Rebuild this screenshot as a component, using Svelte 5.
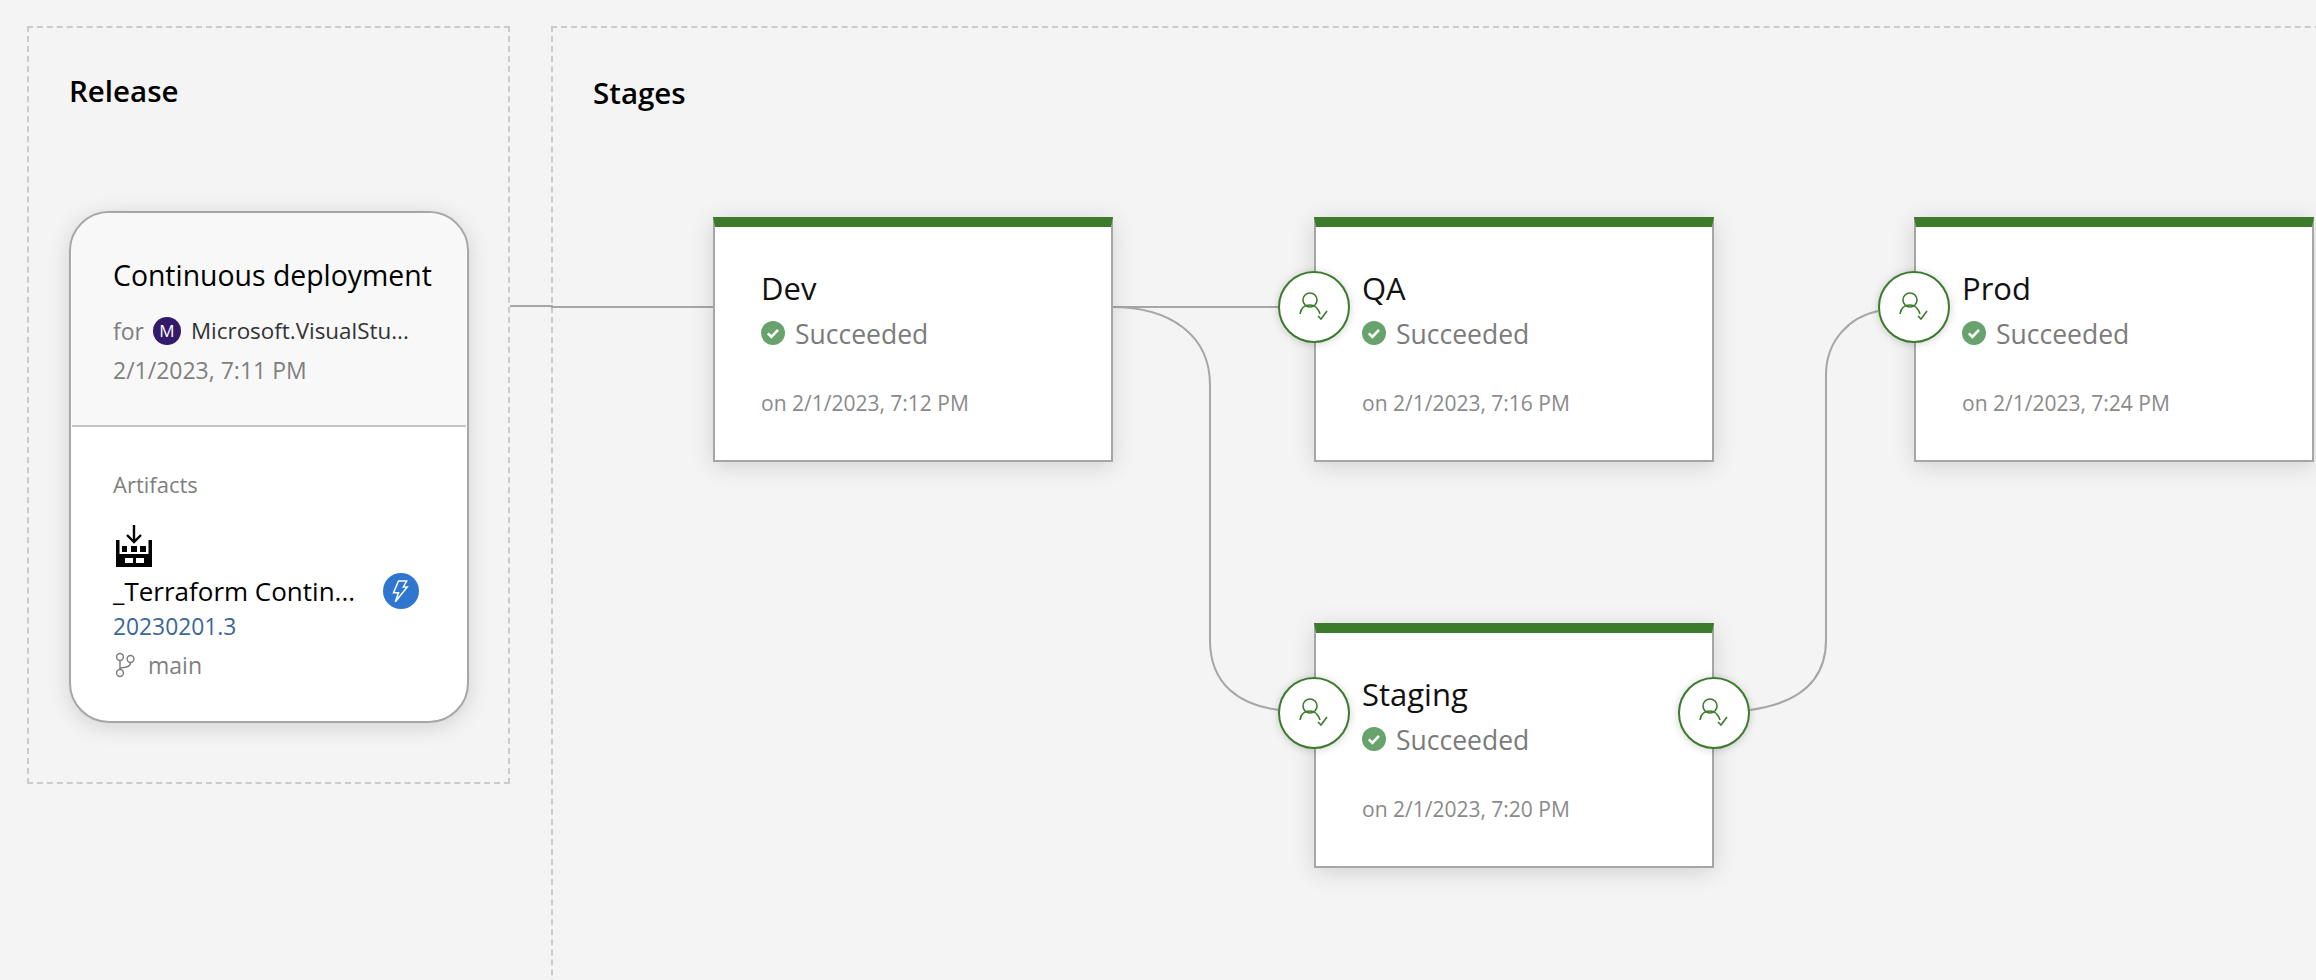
<script>
  const stages = [
    { name: "Dev", date: "on 2/1/2023, 7:12 PM", x: 713, y: 217, pre: false, post: false },
    { name: "QA", date: "on 2/1/2023, 7:16 PM", x: 1314, y: 217, pre: true, post: false },
    { name: "Prod", date: "on 2/1/2023, 7:24 PM", x: 1914, y: 217, pre: true, post: false },
    { name: "Staging", date: "on 2/1/2023, 7:20 PM", x: 1314, y: 623, pre: true, post: true },
  ];
  const wires = [
    "M510 306 L552 306 L552 307 L713 307",
    "M1112 307 L1280 307",
    "M1112 307 C1170 307 1210 335 1210 385 L1210 640 C1210 685 1240 705 1279 710",
    "M1750 710 C1800 703 1826 680 1826 640 L1826 375 C1826 340 1850 317 1878 311",
  ];
</script>

{#snippet approver(side)}
  <div class="approver {side}">
    <svg width="72" height="72" viewBox="-36 -36 72 72" fill="none" stroke="#3c7a2c" stroke-width="1.6">
      <circle cx="-4" cy="-7" r="7" />
      <path d="M-14 7 C-13 0 -9 -2 -4 -2 C1 -2 4 1 6 7" />
      <path d="M4 9 L7 12 L13 4" />
    </svg>
  </div>
{/snippet}

<div class="page">
  <section class="release">
    <h2>Release</h2>
    <div class="card">
      <div class="card-head">
        <div class="trigger">Continuous deployment</div>
        <div class="for">
          <span class="muted">for</span>
          <span class="avatar">M</span>
          <span class="owner">Microsoft.VisualStu...</span>
        </div>
        <div class="muted when">2/1/2023, 7:11 PM</div>
      </div>
      <div class="card-body">
        <div class="muted artifacts">Artifacts</div>
        <svg class="factory" width="36" height="42" viewBox="0 0 36 42">
          <path d="M18 0 V16 M11 10 L18 17 L25 10" fill="none" stroke="#000" stroke-width="2.4" />
          <path fill-rule="evenodd" d="M0 15 H3.5 V29 H32.5 V15 H36 V42 H0 Z M9 33 V38 H17 V33 Z M20 33 V38 H28 V33 Z" />
          <rect x="6" y="21" width="5" height="6" />
          <rect x="15" y="21" width="6" height="6" />
          <rect x="24" y="21" width="6" height="6" />
        </svg>
        <div class="artifact-row">
          <span class="artifact-name">_Terraform Contin...</span>
          <span class="badge">
            <svg width="36" height="36" viewBox="-18 -18 36 36">
              <circle r="18" fill="#2f76cf" />
              <path d="M-2.5 -10 H5.7 L2.3 -4 H6.3 L-5.7 10.7 L-2.5 1.7 H-7.5 Z" fill="none" stroke="#fff" stroke-width="1.5" />
            </svg>
          </span>
        </div>
        <div class="version">20230201.3</div>
        <div class="branch">
          <svg width="22" height="26" viewBox="0 0 22 26" fill="none" stroke="#808080" stroke-width="1.5">
            <circle cx="5" cy="5" r="3.4" />
            <circle cx="5" cy="21" r="3.4" />
            <circle cx="15.5" cy="7" r="3.4" />
            <path d="M5 8.4 V17.6 M15.5 10.4 C15.5 15 10 15.5 5 16" />
          </svg>
          <span class="muted">main</span>
        </div>
      </div>
    </div>
  </section>

  <section class="stages">
    <h2>Stages</h2>
    <svg class="wires" width="2316" height="980" fill="none" stroke="#a6a6a6" stroke-width="2">
      {#each wires as d}
        <path {d} />
      {/each}
    </svg>
    {#each stages as s}
      <div class="node" style="left: {s.x - 553}px; top: {s.y - 28}px">
        <div class="node-name">{s.name}</div>
        <div class="status">
          <svg width="24" height="24" viewBox="0 0 24 24">
            <circle cx="12" cy="12" r="12" fill="#68a26c" />
            <path d="M6.8 12.4 L10.4 15.8 L17 8.8" fill="none" stroke="#fff" stroke-width="2.6" />
          </svg>
          <span>Succeeded</span>
        </div>
        <div class="node-date">{s.date}</div>
        {#if s.pre}{@render approver("pre")}{/if}
        {#if s.post}{@render approver("post")}{/if}
      </div>
    {/each}
  </section>
</div>

<style>
  :global(body) {
    margin: 0;
    background: #f4f4f4;
    overflow: hidden;
  }

  .page {
    display: flex;
    gap: 41px;
    width: 2316px;
    height: 980px;
    overflow: hidden;
    padding: 26px 0 0 27px;
    box-sizing: border-box;
    font-family: "Open Sans", "Noto Sans", sans-serif;
    color: #000;
  }

  h2 {
    margin: 0;
    font-size: 29.5px;
    font-weight: 600;
    line-height: 40px;
  }

  .release,
  .stages {
    border: 2px dashed #cbcbcb;
    box-sizing: border-box;
    flex: none;
  }

  .release {
    width: 483px;
    height: 758px;
    padding: 43px 40px 0 40px;
  }

  .stages {
    position: relative;
    width: 1850px;
    height: 1100px;
    padding: 45px 0 0 40px;
  }

  .wires {
    position: absolute;
    left: -553px;
    top: -28px;
  }

  .card {
    margin-top: 100px;
    width: 400px;
    height: 512px;
    box-sizing: border-box;
    border: 2px solid #a6a6a6;
    border-radius: 40px;
    background: #fff;
    box-shadow: 0 4px 22px rgba(0, 0, 0, 0.14);
    overflow: hidden;
  }

  .card-head {
    height: 214px;
    box-sizing: border-box;
    padding: 42px 0 0 41px;
    background: #f8f8f8;
    border-bottom: 2px solid #c4c4c4;
    margin: 0 1px;
  }

  .trigger {
    font-size: 28.4px;
    line-height: 40px;
  }

  .for {
    display: flex;
    align-items: center;
    margin-top: 20px;
    font-size: 23px;
    line-height: 32px;
  }

  .muted {
    color: #7f7f7f;
  }

  .avatar {
    width: 28px;
    height: 28px;
    margin: 0 10px 0 9px;
    border-radius: 50%;
    background: #341a6b;
    color: #fff;
    font-size: 17px;
    line-height: 28px;
    text-align: center;
  }

  .owner {
    color: #333;
    font-size: 22.4px;
  }

  .when {
    margin-top: 7px;
    font-size: 23px;
    line-height: 32px;
  }

  .card-body {
    padding: 42px 0 0 42px;
  }

  .artifacts {
    font-size: 22px;
    line-height: 30px;
  }

  .factory {
    display: block;
    margin: 26px 0 0 3px;
  }

  .artifact-row {
    display: flex;
    align-items: center;
    height: 40px;
    margin-top: 4px;
    font-size: 26px;
  }

  .artifact-name {
    width: 270px;
  }

  .badge {
    display: flex;
  }

  .version {
    margin-top: 0;
    font-size: 22.8px;
    line-height: 32px;
    color: #3b6699;
  }

  .branch {
    display: flex;
    align-items: center;
    gap: 11px;
    margin: 6px 0 0 2px;
    font-size: 23px;
    line-height: 32px;
  }

  .node {
    position: absolute;
    width: 400px;
    height: 245px;
    box-sizing: border-box;
    border: 2px solid #a6a6a6;
    border-top: 10px solid #3c7a2c;
    padding: 40px 0 0 46px;
    background: #fff;
    box-shadow: 0 4px 22px rgba(0, 0, 0, 0.14);
  }

  .node-name {
    font-size: 31px;
    line-height: 42px;
    color: #111;
  }

  .status {
    display: flex;
    align-items: center;
    gap: 10px;
    margin-top: 7px;
    font-size: 26.5px;
    line-height: 36px;
    color: #7b7b7b;
  }

  .status svg {
    flex: none;
    margin-top: -2px;
  }

  .node-date {
    margin-top: 36px;
    font-size: 21px;
    line-height: 30px;
    color: #8a8a8a;
  }

  .approver {
    position: absolute;
    top: 44px;
    width: 72px;
    height: 72px;
    box-sizing: border-box;
    border: 2px solid #3c7a2c;
    border-radius: 50%;
    background: #fff;
    box-shadow: 0 1px 8px rgba(0, 0, 0, 0.18);
  }

  .approver svg {
    display: block;
    margin: -2px;
  }

  .approver.pre {
    left: -38px;
  }

  .approver.post {
    right: -38px;
  }
</style>
